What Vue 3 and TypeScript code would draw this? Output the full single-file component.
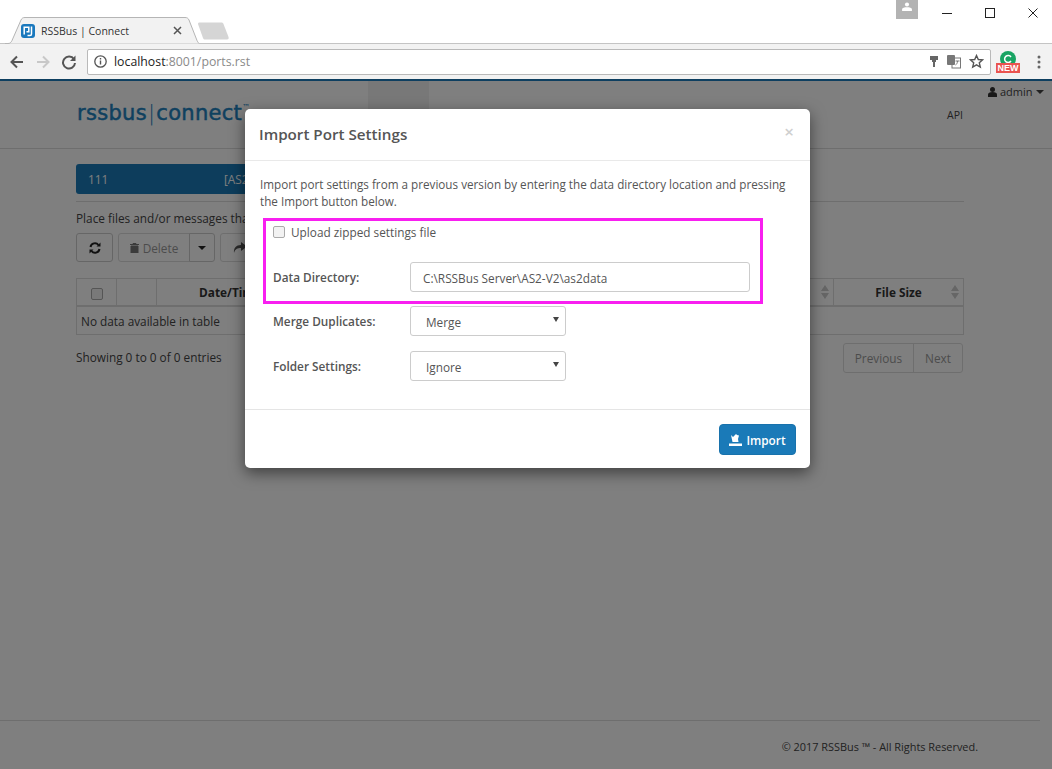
<script setup lang="ts">
const columns: string[] = ['', '', 'Date/Time', '', 'File Size']
</script>

<template>
  <div class="screen">
    <header class="browser">
      <div class="titlebar">
        <div class="tabs">
          <div class="tab">
            <svg class="tab-shape" width="194" height="27" viewBox="0 0 194 27">
              <path d="M0 26.5h3c2 0 3-1 4-3L16 3c1-2 2-2.500 4-2.500h160c2 0 3 .5 4 2.500l8 20.500c1 2 2 3 2 3" fill="#f2f2f2" stroke="#b5b5b5" />
            </svg>
            <svg class="favicon" width="14" height="14" viewBox="0 0 14 14">
              <rect width="14" height="14" rx="3" fill="#1a78bd" />
              <path d="M3.200 10.500V3.200h4.600v4.600H5.500M10.500 2.500v7.500c0 1-.5 1.500-1.500 1.500H6.500" fill="none" stroke="#fff" stroke-width="1.500" />
            </svg>
            <span class="tab-title">RSSBus | Connect</span>
            <svg class="tab-close" width="9" height="9" viewBox="0 0 9 9">
              <path d="M1 1l7 7M8 1L1 8" stroke="#555" stroke-width="1.500" />
            </svg>
          </div>
          <svg class="new-tab" width="33" height="18" viewBox="0 0 33 18">
            <path d="M1 2c0-1 .5-1.500 1.500-1.500h22c1 0 1.500.5 2 1.500l5 13c.5 1.500 0 2.500-1.500 2.500H8c-1 0-1.500-.5-2-1.500z" fill="#d5d5d5" />
          </svg>
        </div>
        <div class="window-controls">
          <div class="avatar">
            <svg width="10" height="9" viewBox="0 0 12 11">
              <circle cx="6" cy="3" r="2.500" fill="#fff" />
              <path d="M0 11V9c0-2 3-2.500 6-2.500S12 7 12 9v2z" fill="#fff" />
            </svg>
          </div>
          <svg class="win-btn" width="10" height="10" viewBox="0 0 10 10"><path d="M0 5.500h10" stroke="#222" /></svg>
          <svg class="win-btn" width="10" height="10" viewBox="0 0 10 10"><rect x=".5" y=".5" width="9" height="9" fill="none" stroke="#222" /></svg>
          <svg class="win-btn" width="10" height="10" viewBox="0 0 10 10"><path d="M.5.5l9 9M9.500.5l-9 9" stroke="#222" /></svg>
        </div>
      </div>
      <div class="toolbar">
        <svg class="nav-icon" width="16" height="14" viewBox="0 0 16 14">
          <path d="M14 7H3M8 1.500 2.500 7 8 12.500" fill="none" stroke="#555" stroke-width="2" />
        </svg>
        <svg class="nav-icon" width="16" height="14" viewBox="0 0 16 14">
          <path d="M2 7h11M8 1.500 13.500 7 8 12.500" fill="none" stroke="#c8c8c8" stroke-width="2" />
        </svg>
        <svg class="nav-icon" width="16" height="16" viewBox="0 0 16 16">
          <path d="M13 5.200A6 6 0 1 0 14 9" fill="none" stroke="#555" stroke-width="2" />
          <path d="M14.500 1.500v5.500H9z" fill="#555" />
        </svg>
        <div class="omnibox">
          <svg width="13" height="13" viewBox="0 0 13 13">
            <circle cx="6.500" cy="6.500" r="5.700" fill="none" stroke="#555" stroke-width="1.300" />
            <path d="M6.500 5.500v4M6.500 3v1.500" stroke="#555" stroke-width="1.400" />
          </svg>
          <span class="url"><span class="url-host">localhost</span>:8001/ports.rst</span>
          <svg class="omni-end" width="10" height="14" viewBox="0 0 10 14">
            <path d="M1 1h8v4H7v2H6v5H4V7H3V5H1z" fill="#666" />
          </svg>
          <svg class="omni-end" width="14" height="14" viewBox="0 0 14 14">
            <rect x="5" y="3" width="8.500" height="10" fill="#fff" stroke="#777" />
            <rect x="0" y="0" width="8" height="10" rx="1" fill="#777" />
            <path d="M8.500 6h4M10.500 6c0 2-1 3.500-2 4" fill="none" stroke="#777" />
          </svg>
          <svg class="omni-end star" width="15" height="15" viewBox="0 0 15 15">
            <path d="M7.500 1.500l1.800 4 4.300.4-3.300 2.900 1 4.300-3.800-2.300-3.800 2.300 1-4.300L1.400 5.900l4.300-.4z" fill="none" stroke="#555" stroke-width="1.400" />
          </svg>
        </div>
        <div class="ext">
          <svg width="16" height="14" viewBox="0 0 16 14">
            <circle cx="8" cy="8" r="8" fill="#19a463" />
            <path d="M11 6a3.500 3.500 0 1 0 0 4" fill="none" stroke="#fff" stroke-width="1.500" />
          </svg>
          <span class="new-badge">NEW</span>
        </div>
        <svg class="kebab" width="4" height="14" viewBox="0 0 4 14">
          <circle cx="2" cy="2" r="1.500" fill="#666" />
          <circle cx="2" cy="7" r="1.500" fill="#666" />
          <circle cx="2" cy="12" r="1.500" fill="#666" />
        </svg>
      </div>
    </header>

    <main class="page">
      <div class="app-header">
        <div class="logo">rssbus<span class="logo-bar">|</span>connect<sup>™</sup></div>
        <div class="active-nav"></div>
        <div class="app-header-right">
          <div class="user">
            <svg width="9" height="10" viewBox="0 0 9 10">
              <circle cx="4.500" cy="2.500" r="2.500" fill="#333" />
              <path d="M0 10V7.500C0 6 1.500 5 4.500 5S9 6 9 7.500V10z" fill="#333" />
            </svg>
            admin
            <span class="caret"></span>
          </div>
          <div class="api">API</div>
        </div>
      </div>

      <div class="content">
        <div class="connector-bar"><span class="bar-name">111</span><span>[AS2]</span></div>
        <hr class="rule" />
        <p class="hint">Place files and/or messages that you would like to send in the Send folder.</p>
        <div class="actions">
          <button class="btn btn-strong">
            <svg width="12" height="12" viewBox="0 0 12 12">
              <path d="M1.500 5a4.500 4.500 0 0 1 8-2M10.500 7a4.500 4.500 0 0 1-8 2" fill="none" stroke="#222" stroke-width="2" />
              <path d="M11.500 .5v4h-4zM.5 11.500v-4h4z" fill="#222" />
            </svg>
          </button>
          <div class="btn-group">
            <button class="btn btn-muted btn-delete">
              <svg width="9" height="10" viewBox="0 0 9 10"><path d="M1 3h7v7H1zM0 1.500h9M3 1.500V.5h3v1" fill="#777" stroke="#777" /></svg>
              Delete
            </button>
            <button class="btn btn-caret"><span class="caret dark"></span></button>
          </div>
          <button class="btn btn-forward">
            <svg width="14" height="12" viewBox="0 0 14 12">
              <path d="M8 0l6 4.500L8 9V6C4.500 6 2 7 1 11 .5 6 3 3 8 3z" fill="#555" />
            </svg>
          </button>
        </div>
        <table class="grid">
          <thead>
            <tr>
              <th v-for="(col, i) in columns" :key="i">
                <input v-if="i === 0" type="checkbox" class="check" />
                <span v-else>{{ col }}</span>
                <span v-if="i > 1" class="sort"></span>
              </th>
            </tr>
          </thead>
          <tbody>
            <tr><td colspan="5">No data available in table</td></tr>
          </tbody>
        </table>
        <div class="table-foot">
          <span>Showing 0 to 0 of 0 entries</span>
          <div class="pager"><span>Previous</span><span>Next</span></div>
        </div>
      </div>

      <footer class="foot">© 2017 RSSBus ™ - All Rights Reserved.</footer>

      <div class="backdrop"></div>
    </main>

    <section class="modal">
      <div class="modal-head">
        <h2>Import Port Settings</h2>
        <span class="modal-x">×</span>
      </div>
      <div class="modal-body">
        <p>Import port settings from a previous version by entering the data directory location and pressing the Import button below.</p>
        <label class="upload"><input type="checkbox" class="check" /> Upload zipped settings file</label>
        <div class="field field-dir">
          <label>Data Directory:</label>
          <input class="text-input wide" value="C:\RSSBus Server\AS2-V2\as2data" />
        </div>
        <div class="field">
          <label>Merge Duplicates:</label>
          <div class="select-wrap"><select class="text-input"><option>Merge</option></select></div>
        </div>
        <div class="field field-folder">
          <label>Folder Settings:</label>
          <div class="select-wrap"><select class="text-input"><option>Ignore</option></select></div>
        </div>
      </div>
      <div class="modal-foot">
        <button class="import">
          <svg width="13" height="12" viewBox="0 0 13 12">
            <path d="M0 9.500h13V12H0zM2 1l2 2 3-3 1 1 2 .5L9 5l.5 3h-6z" fill="#fff" />
          </svg>
          Import
        </button>
      </div>
      <div class="highlight"></div>
    </section>
  </div>
</template>

<style scoped>
.screen {
  position: relative;
  width: 1052px;
  height: 769px;
  overflow: hidden;
  display: flex;
  flex-direction: column;
  background: #fff;
  font-family: "Open Sans", "Noto Sans", sans-serif;
  font-size: 11.8px;
  color: #555;
}
.browser { height: 81px; flex: none; display: flex; flex-direction: column; }
.titlebar { height: 43px; display: flex; justify-content: space-between; background: #fff; }
.tabs { display: flex; align-items: flex-end; padding-left: 5px; }
.tab {
  position: relative;
  width: 194px;
  height: 27px;
  margin-bottom: -1px;
  display: flex;
  align-items: center;
  padding-left: 16px;
  box-sizing: border-box;
  z-index: 1;
}
.tab-shape { position: absolute; left: 0; top: 0; }
.favicon { position: relative; margin-right: 6px; }
.tab-title { position: relative; font-size: 10.5px; color: #333; width: 132px; }
.tab-close { position: relative; }
.new-tab { margin-left: -2px; margin-bottom: 3px; }
.window-controls { display: flex; align-items: flex-start; }
.avatar {
  width: 22px;
  height: 19px;
  background: #b3b3b3;
  display: flex;
  justify-content: center;
  padding-top: 2px;
  box-sizing: border-box;
  margin-right: 24px;
}
.win-btn { margin: 8px 33px 0 0; }
.win-btn:last-child { margin-right: 14px; }
.toolbar {
  height: 38px;
  box-sizing: border-box;
  background: #f2f2f2;
  border-top: 1px solid #c4c4c4;
  border-bottom: 2px solid #0e3f60;
  display: flex;
  align-items: center;
  padding-left: 9px;
}
.nav-icon { margin-right: 10px; }
.omnibox {
  width: 904px;
  height: 26px;
  box-sizing: border-box;
  background: #fff;
  border: 1px solid #b9b9b9;
  border-radius: 2px;
  display: flex;
  align-items: center;
  padding-left: 6px;
  padding-right: 6px;
}
.url { margin-left: 7px; font-size: 12.3px; color: #8a8a8a; flex: 1; }
.url-host { color: #222; }
.omni-end { margin-left: 8px; }
.ext { position: relative; width: 24px; height: 22px; margin-left: 5px; display: flex; justify-content: center; overflow: hidden; }
.new-badge {
  position: absolute;
  left: 0;
  bottom: 0;
  width: 24px;
  height: 10px;
  background: #ea5450;
  color: #fff;
  font-size: 9px;
  line-height: 10px;
  font-weight: 600;
  text-align: center;
  font-family: "Liberation Sans", sans-serif;
}
.kebab { margin-left: 17px; }

.page { position: relative; flex: 1; display: flex; flex-direction: column; }
.backdrop { position: absolute; inset: 0; background: rgba(0, 0, 0, 0.5); }
.app-header {
  height: 68px;
  box-sizing: border-box;
  border-bottom: 1px solid #ddd;
  display: flex;
  padding-left: 77px;
  position: relative;
}
.logo {
  font-family: "DejaVu Sans", sans-serif;
  font-size: 21px;
  line-height: 24px;
  letter-spacing: 0.3px;
  color: #1e82bf;
  -webkit-text-stroke: 0.5px #1e82bf;
  margin-top: 20px;
  width: 291px;
  white-space: nowrap;
}
.logo-bar { font-weight: 300; margin: 0 1px; -webkit-text-stroke: 0; }
.logo sup { font-size: 8px; vertical-align: 10px; line-height: 0; -webkit-text-stroke: 0; }
.active-nav { width: 61px; height: 28px; background: #f0f0f0; }
.app-header-right { margin-left: auto; width: 65px; position: relative; font-size: 11px; color: #444; }
.user { margin-top: 3px; margin-left: 1px; display: flex; align-items: center; gap: 3px; white-space: nowrap; }
.caret {
  display: inline-block;
  width: 0;
  height: 0;
  border-left: 4px solid transparent;
  border-right: 4px solid transparent;
  border-top: 4px solid #444;
}
.caret.dark { border-top-color: #222; }
.api { margin: 9px 0 0 -40px; font-size: 10.5px; }

.content { padding: 15px 88px 0 76px; flex: 1; display: flex; flex-direction: column; }
.connector-bar {
  width: 420px;
  height: 30px;
  flex: none;
  background: #1a7ab8;
  border-radius: 3px;
  color: #fff;
  display: flex;
  align-items: center;
  padding-left: 12px;
  box-sizing: border-box;
}
.bar-name { width: 136px; }
.rule { width: 100%; border: 0; border-top: 1px solid #ddd; margin: 7px 0 0; }
.hint { margin: 8px 0 0; line-height: 16px; white-space: nowrap; color: #444; }
.actions { display: flex; margin-top: 7px; gap: 5px; height: 29px; }
.btn {
  height: 29px;
  background: #fff;
  border: 1px solid #ccc;
  border-radius: 3px;
  padding: 0;
  font: inherit;
  display: flex;
  align-items: center;
  justify-content: center;
}
.btn-strong { width: 37px; }
.btn-group { display: flex; }
.btn-delete { width: 72px; border-radius: 3px 0 0 3px; color: #999; gap: 4px; border-color: #ddd; }
.btn-caret { width: 26px; margin-left: -1px; border-radius: 0 3px 3px 0; }
.btn-forward { width: 40px; border-color: #ddd; }
.grid {
  width: 888px;
  margin-top: 16px;
  border-collapse: collapse;
  table-layout: fixed;
  flex: none;
}
.grid th {
  position: relative;
  height: 26px;
  padding: 0;
  border: 1px solid #ddd;
  border-bottom: 2px solid #ddd;
  font-size: 11.8px;
  font-weight: 700;
  color: #333;
}
.grid th:nth-child(1), .grid th:nth-child(2) { width: 39px; }
.grid th:nth-child(3) { width: 146px; }
.grid th:nth-child(5) { width: 129px; }
.grid td { height: 27px; padding: 0 4px; border: 1px solid #ddd; font-size: 11.8px; color: #444; }
.sort {
  position: absolute;
  right: 4px;
  top: 6px;
  width: 0;
  height: 0;
  border-left: 4px solid transparent;
  border-right: 4px solid transparent;
  border-bottom: 6px solid #ccc;
}
.sort::after {
  content: "";
  position: absolute;
  left: -4px;
  top: 8px;
  width: 0;
  height: 0;
  border-left: 4px solid transparent;
  border-right: 4px solid transparent;
  border-top: 6px solid #ccc;
}
.table-foot { display: flex; justify-content: space-between; margin-top: 8px; align-items: flex-start; padding-right: 1px; }
.table-foot > span { margin-top: 6px; color: #444; }
.pager { display: flex; border: 1px solid #ddd; border-radius: 3px; height: 30px; box-sizing: border-box; color: #999; }
.pager span { padding: 0 11px; display: flex; align-items: center; }
.pager span + span { border-left: 1px solid #ddd; }
.foot {
  width: 1040px;
  height: 49px;
  box-sizing: border-box;
  border-top: 1px solid #ddd;
  padding: 18px 62px 0 0;
  text-align: right;
  font-size: 10.9px;
  color: #444;
  flex: none;
}

.check {
  appearance: none;
  width: 12px;
  height: 12px;
  margin: 0;
  box-sizing: border-box;
  background: #f2f2f2;
  border: 1px solid #aaa;
  border-radius: 2px;
  vertical-align: middle;
}
.modal {
  position: absolute;
  left: 245px;
  top: 109px;
  width: 565px;
  height: 359px;
  background: #fff;
  border-radius: 5px;
  box-shadow: 0 5px 15px rgba(0, 0, 0, 0.5);
  display: flex;
  flex-direction: column;
}
.modal-head {
  height: 52px;
  flex: none;
  box-sizing: border-box;
  border-bottom: 1px solid #e9e9e9;
  display: flex;
  justify-content: space-between;
  align-items: center;
  padding: 0 15px;
}
.modal-head h2 { margin: -1px 0 0 -1px; font-size: 15.2px; font-weight: 600; color: #555; }
.modal-x { font-size: 17px; color: #cfcfcf; font-weight: 600; margin-top: -6px; margin-right: 1px; }
.modal-body { flex: 1; padding: 15px 15px 0 14px; }
.modal-body p { margin: 0 0 0 1px; line-height: 17px; font-size: 11.7px; color: #555; width: 535px; }
.upload { display: flex; align-items: center; gap: 6px; margin: 14px 0 0 14px; height: 16px; color: #555; }
.field { display: flex; align-items: center; height: 30px; margin: 14px 0 0 14px; }
.field-dir { margin-top: 22px; }
.field-folder { margin-top: 15px; }
.field label { width: 137px; font-weight: 600; color: #555; flex: none; }
.text-input {
  height: 30px;
  width: 156px;
  box-sizing: border-box;
  border: 1px solid #ccc;
  border-radius: 3px;
  background: #fff;
  font: inherit;
  color: #555;
  padding: 0 12px;
  outline: 0;
  appearance: none;
}
.text-input.wide { width: 340px; padding-top: 1px; }
.select-wrap { position: relative; width: 156px; height: 30px; }
.select-wrap select { padding: 2px 0 0 15px; }
.select-wrap::after {
  content: "";
  position: absolute;
  right: 7px;
  top: 11px;
  width: 0;
  height: 0;
  border-left: 3px solid transparent;
  border-right: 3px solid transparent;
  border-top: 5px solid #444;
}
.modal-foot {
  height: 59px;
  flex: none;
  box-sizing: border-box;
  border-top: 1px solid #e5e5e5;
  display: flex;
  justify-content: flex-end;
  align-items: flex-start;
  padding: 14px 14px 0 0;
}
.import {
  width: 77px;
  height: 31px;
  background: #1a7ab8;
  border: 1px solid #1872ac;
  border-radius: 4px;
  color: #fff;
  font: inherit;
  font-weight: 600;
  display: flex;
  align-items: center;
  justify-content: center;
  gap: 4px;
  padding: 0;
}
.highlight {
  position: absolute;
  left: 18px;
  top: 109px;
  width: 500px;
  height: 86px;
  box-sizing: border-box;
  border: 3px solid #f81ff0;
  pointer-events: none;
}
</style>
